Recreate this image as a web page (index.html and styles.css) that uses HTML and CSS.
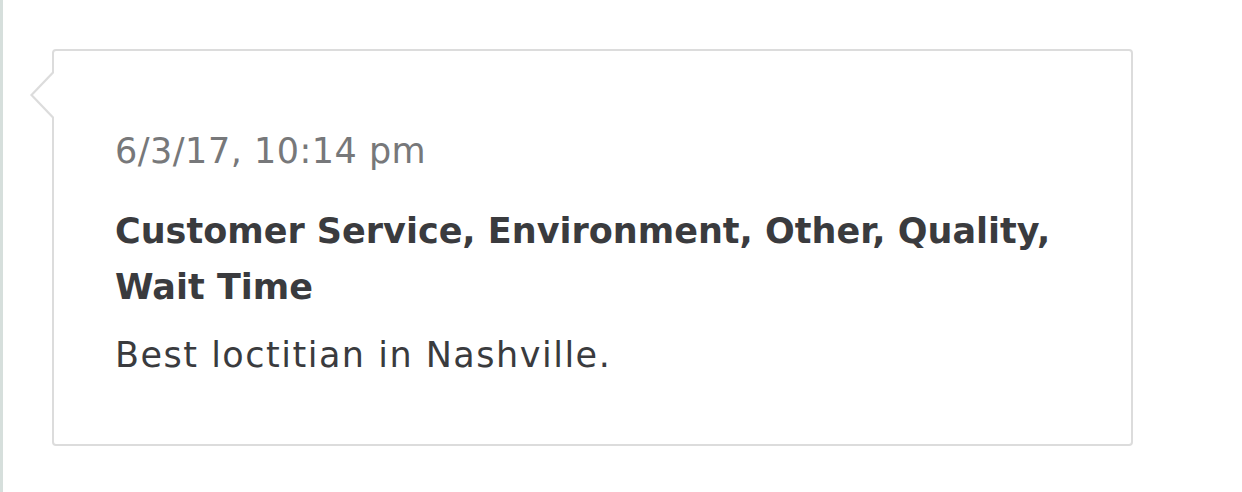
FILE: index.html
```html
<!DOCTYPE html>
<html>
<head>
<meta charset="utf-8">
<link rel="stylesheet" href="styles.css">
</head>
<body>
<div class="timeline">
  <div class="card">
    <div class="date">6/3/17, 10:14 pm</div>
    <div class="tags">Customer Service, Environment, Other, Quality, Wait Time</div>
    <div class="comment">Best loctitian in Nashville.</div>
  </div>
</div>
</body>
</html>
```
FILE: styles.css
```css
html, body {
  margin: 0;
  padding: 0;
  background: #ffffff;
}
body {
  font-family: "DejaVu Sans", "Liberation Sans", sans-serif;
  font-variant-ligatures: none;
  width: 1242px;
  height: 492px;
  overflow: hidden;
}
.timeline {
  border-left: 3px solid #d6dfdc;
  height: 492px;
  box-sizing: border-box;
  padding: 49px 0 0 49px;
}
.card {
  position: relative;
  width: 1081px;
  height: 397px;
  box-sizing: border-box;
  border: 2px solid #dcdcdc;
  border-radius: 4px;
  padding: 78px 60px 0 61px;
}
.card::before,
.card::after {
  content: "";
  position: absolute;
  top: 21px;
  width: 0;
  height: 0;
  border-top: 23px solid transparent;
  border-bottom: 23px solid transparent;
}
.card::before {
  left: -24px;
  border-right: 22px solid #dcdcdc;
}
.card::after {
  left: -21px;
  border-right: 22px solid #ffffff;
}
.date {
  font-size: 35px;
  line-height: 44px;
  letter-spacing: 0.5px;
  color: #77787a;
}
.tags {
  margin-top: 30px;
  font-size: 35px;
  line-height: 56px;
  font-weight: 700;
  color: #3a3b3e;
}
.comment {
  margin-top: 18px;
  font-size: 35px;
  line-height: 44px;
  letter-spacing: 1.5px;
  color: #3a3b3e;
}
```
